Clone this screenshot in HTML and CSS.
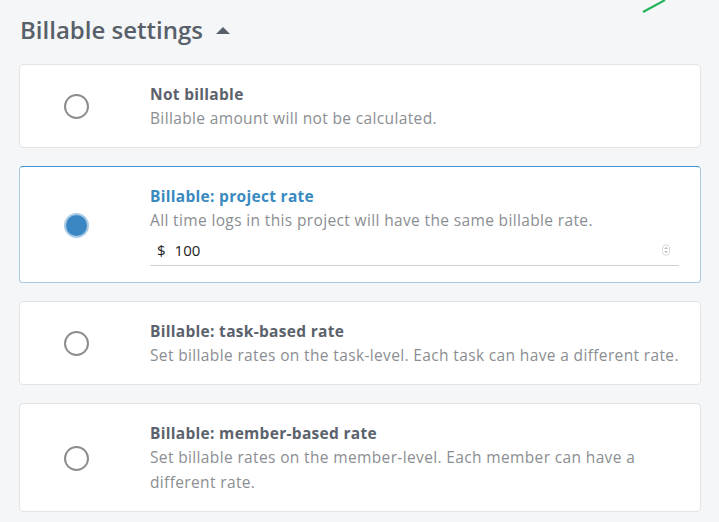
FILE: index.html
```html
<!DOCTYPE html>
<html>
<head>
<meta charset="utf-8">
<link rel="stylesheet" href="styles.css">
</head>
<body>
<div class="page">
  <svg class="deco" width="30" height="16" viewBox="0 0 30 16"><line x1="2" y1="12" x2="24" y2="0" stroke="#22b35a" stroke-width="2"/></svg>
  <h2 class="heading">Billable settings <span class="caret"></span></h2>
  <div class="options">
    <div class="card">
      <div class="radio-col"><span class="radio"></span></div>
      <div class="text">
        <div class="title">Not billable</div>
        <div class="desc">Billable amount will not be calculated.</div>
      </div>
    </div>
    <div class="card selected">
      <div class="radio-col"><span class="radio on"></span></div>
      <div class="text">
        <div class="title">Billable: project rate</div>
        <div class="desc">All time logs in this project will have the same billable rate.</div>
        <div class="rate">
          <span class="cur">$</span><span class="val">100</span>
          <svg class="spin" width="8" height="12" viewBox="0 0 8 12"><rect x="0.5" y="0.8" width="7" height="10.4" rx="3.5" fill="none" stroke="#cfcfcf" stroke-width="0.8"/><path d="M2.7 5 L4 3.6 L5.3 5 M2.7 7 L4 8.4 L5.3 7" fill="none" stroke="#8a8a8a" stroke-width="0.9"/></svg>
        </div>
      </div>
    </div>
    <div class="card">
      <div class="radio-col"><span class="radio"></span></div>
      <div class="text">
        <div class="title">Billable: task-based rate</div>
        <div class="desc">Set billable rates on the task-level. Each task can have a different rate.</div>
      </div>
    </div>
    <div class="card">
      <div class="radio-col"><span class="radio"></span></div>
      <div class="text">
        <div class="title">Billable: member-based rate</div>
        <div class="desc">Set billable rates on the member-level. Each member can have a different rate.</div>
      </div>
    </div>
  </div>
</div>
</body>
</html>
```

FILE: styles.css
```css
* { box-sizing: border-box; }
html, body { margin: 0; padding: 0; }
body {
  background: #f5f6f7;
  font-family: "Open Sans", "Noto Sans", sans-serif;
  width: 719px;
  height: 522px;
  overflow: hidden;
}
.page {
  position: relative;
  padding: 0 18px 0 19px;
}
.deco { position: absolute; left: 641px; top: 0; }
.heading {
  margin: 0;
  padding: 14px 0 0 1px;
  height: 64px;
  font-size: 24px;
  font-weight: 600;
  color: #58606a;
  display: flex;
  align-items: flex-start;
  gap: 13px;
  line-height: 32px;
}
.caret {
  width: 0; height: 0;
  border-left: 7px solid transparent;
  border-right: 7px solid transparent;
  border-bottom: 7px solid #58606a;
  margin-top: 13px;
}
.options { display: flex; flex-direction: column; gap: 18px; }
.card {
  background: #fff;
  border: 1px solid #e2e4e6;
  border-radius: 4px;
  display: grid;
  grid-template-columns: 130px 1fr;
  align-items: center;
  padding: 17px 20px 16px 0;
}
.card.selected {
  border-color: #a9c9dc;
  border-top-color: #3d95d6;
}
.radio-col { display: flex; padding-left: 44px; }
.radio {
  width: 25px; height: 25px;
  border: 2px solid #8d8d8d;
  border-radius: 50%;
  display: block;
}
.radio.on {
  border: none;
  background: #3b87c4;
  box-shadow: 0 0 0 2px #a9cbe6;
  width: 21px; height: 21px;
  margin: 2px;
}
.title {
  font-size: 15.5px;
  letter-spacing: 0.3px;
  font-weight: 700;
  color: #5b626c;
  line-height: 24px;
}
.selected .title { color: #3a8ac0; }
.desc {
  font-size: 15.5px;
  letter-spacing: 0.36px;
  color: #8b8e92;
  line-height: 25px;
}
.rate {
  display: flex;
  align-items: center;
  height: 33px;
  padding-top: 2px;
  border-bottom: 1px solid #cfd2d5;
  margin-right: 1px;
  font-size: 15px;
  color: #222;
  padding-left: 7px;
}
.cur { margin-right: 9px; }
.val { flex: 1; }
.spin { margin-right: 9px; }
```
